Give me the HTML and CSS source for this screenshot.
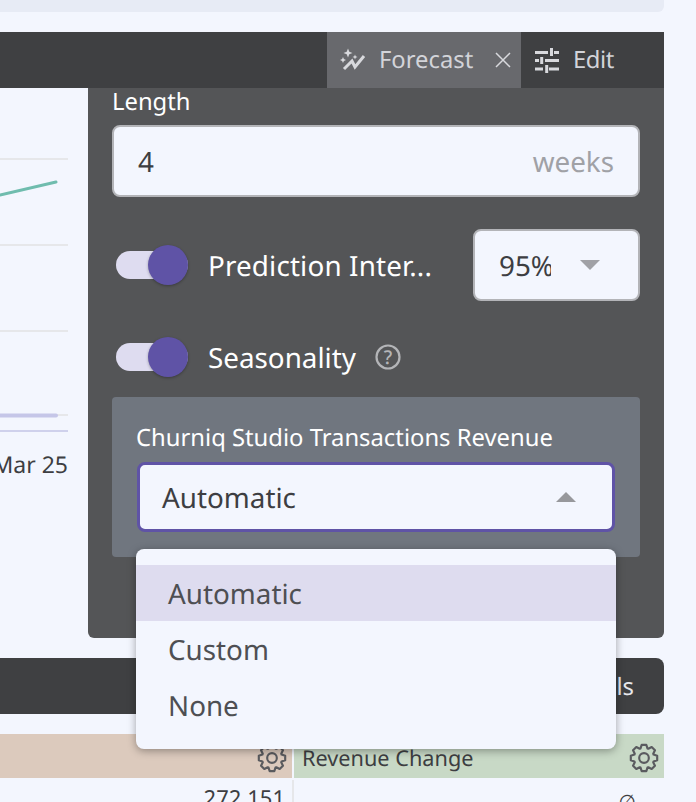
FILE: index.html
```html
<!DOCTYPE html>
<html lang="en">
<head>
<meta charset="utf-8">
<title>Forecast</title>
<link rel="stylesheet" href="styles.css">
</head>
<body>
<div class="page">
  <div class="topstrip"></div>
  <div class="tabbar">
    <div class="tab tab-active">
      <svg class="ico-forecast" viewBox="0 0 26 24" width="26" height="24"><path fill="none" stroke="#d8d9dd" stroke-width="3" d="M4 21L12 13L15 19L24 8"/><path fill="#d8d9dd" d="M8 0.500l1.300 3.200 3.200 1.300-3.200 1.300L8 9.500 6.700 6.300 3.500 5l3.200-1.300zM3 9l.9 2.100 2.100.9-2.100.9L3 15l-.9-2.100L0 12l2.100-.9zM15 6.500l.7 1.800 1.800.7-1.800.7-.7 1.800-.7-1.800-1.800-.7 1.800-.7z"/></svg>
      <span class="tab-label">Forecast</span>
      <svg class="ico-close" viewBox="0 0 16 16" width="16" height="16"><path d="M1 1L15 15M15 1L1 15" stroke="#d8d9dd" stroke-width="1.500" fill="none"/></svg>
    </div>
    <div class="tab tab-edit">
      <svg viewBox="0 0 25 27" width="25" height="27"><path fill="none" stroke="#d8d9dd" stroke-width="3" d="M0 5.500H13M19 5.500H24M16.500 1V9M0 13.500H4M10 13.500H24M6.700 10V17M0 22H8M14 22H24M11.700 18V26"/></svg>
      <span class="tab-label tab-label-edit">Edit</span>
    </div>
  </div>
  <div class="main">
    <div class="chart">
      <svg class="chart-svg" viewBox="0 0 88 330" width="88" height="330">
        <g stroke="#e6e7ea" stroke-width="2"><path d="M0 71H68M0 157H68M0 243H68M0 327H68"/></g>
        <path d="M0 107L56 94" stroke="#6fbcae" stroke-width="3" stroke-linecap="round" fill="none"/>
        <path d="M0 327.500H56" stroke="#c5c6e8" stroke-width="4" stroke-linecap="round" fill="none"/>
      </svg>
      <div class="axis-rule"></div>
      <div class="axis-label">Mar 25</div>
    </div>
    <div class="panel">
      <div class="field-label">Length</div>
      <div class="input"><span>4</span><span class="unit">weeks</span></div>
      <div class="row row-pi">
        <div class="toggle"><div class="knob"></div></div>
        <span class="row-label row-label-pi">Prediction Inter...</span>
        <div class="mini-select"><span class="mini-value">95%</span><i class="caret-down"></i></div>
      </div>
      <div class="row row-season">
        <div class="toggle"><div class="knob"></div></div>
        <span class="row-label">Seasonality</span>
        <svg class="ico-help" viewBox="0 0 26 26" width="26" height="26"><circle cx="13" cy="13" r="11.500" fill="none" stroke="#b4b5b8" stroke-width="2.200"/><text x="13" y="19.500" text-anchor="middle" class="help-q">?</text></svg>
      </div>
      <div class="section">
        <div class="section-title">Churniq Studio Transactions Revenue</div>
        <div class="select"><span class="select-value">Automatic</span><i class="caret-up"></i></div>
      </div>
    </div>
  </div>
  <div class="detailbar"><span>Details</span></div>
  <div class="table">
    <div class="head head-a"><svg class="gear" viewBox="0 0 28 28" width="30" height="30"><use href="#gear"/></svg></div>
    <div class="head head-b"><span>Revenue Change</span><svg class="gear" viewBox="0 0 28 28" width="30" height="30"><use href="#gear"/></svg></div>
    <div class="cell cell-a">272,151</div>
    <div class="cell cell-b">∅</div>
  </div>
  <div class="menu">
    <div class="opt opt-sel">Automatic</div>
    <div class="opt">Custom</div>
    <div class="opt">None</div>
  </div>
</div>
<svg width="0" height="0" class="defs"><defs><g id="gear" fill="none" stroke="#5a5b5f" stroke-width="2" stroke-linejoin="round"><path d="M10.750 5.070L11.830 1.690H16.170L17.250 5.070L18.020 5.390L21.170 3.760L24.240 6.830L22.610 9.980L22.930 10.750L26.310 11.830V16.170L22.930 17.250L22.610 18.020L24.240 21.170L21.170 24.240L18.020 22.610L17.250 22.930L16.170 26.310H11.830L10.750 22.930L9.980 22.610L6.830 24.240L3.760 21.170L5.390 18.020L5.070 17.250L1.690 16.170V11.830L5.070 10.750L5.390 9.980L3.760 6.830L6.830 3.760L9.980 5.390Z"/><circle cx="14" cy="14" r="4.500"/></g></defs></svg>
</body>
</html>
```
FILE: styles.css
```css
html, body { margin: 0; padding: 0; }
body { background: #f3f6fe; font-family: "Noto Sans", sans-serif; overflow: hidden; text-rendering: geometricPrecision; }
.page { position: relative; width: 696px; height: 802px; overflow: hidden; }
.defs { position: absolute; }
.topstrip { width: 664px; height: 12px; background: #e7ebf5; border-radius: 0 0 6px 0; margin-bottom: 20px; }
.tabbar { width: 664px; height: 56px; background: #3f4042; display: flex; justify-content: flex-end; }
.tab { display: flex; align-items: center; color: #d3d4d9; font-size: 23.8px; }
.tab-active { width: 194px; background: #68696d; padding-left: 13px; box-sizing: border-box; }
.tab-active .tab-label { margin-left: 13px; }
.ico-close { margin-left: 22px; }
.tab-edit { width: 143px; padding-left: 14px; box-sizing: border-box; }
.tab-edit .tab-label { margin-left: 13px; }
.tab-label { padding-bottom: 2px; }
.tab-label-edit { letter-spacing: -.4px; }
.main { width: 664px; height: 550px; display: flex; }
.chart { width: 88px; position: relative; flex: none; }
.chart-svg { position: absolute; left: 0; top: 0; }
.axis-rule { position: absolute; left: 0; top: 342px; width: 68px; height: 2px; background: #cfd1ec; }
.axis-label { position: absolute; right: 20px; top: 358px; font-size: 23px; line-height: 36px; color: #3d3e42; white-space: nowrap; }
.panel { flex: 1; background: #545557; border-radius: 0 0 6px 6px; padding: 0 24px; box-sizing: border-box; color: #fff; }
.field-label { font-size: 23.8px; line-height: 26px; height: 37px; color: #fff; }
.input { height: 72px; box-sizing: border-box; background: #f3f6fe; border: 2px solid #b3b4b8; border-radius: 8px; display: flex; justify-content: space-between; align-items: center; padding: 2px 24px 0; font-size: 27.8px; color: #3d3e42; }
.unit { color: #a0a1a6; }
.row { display: flex; align-items: center; height: 72px; }
.row-pi { margin-top: 32px; }
.row-season { margin-top: 20px; }
.toggle { width: 72px; height: 28px; margin-left: 4px; background: #dedcf0; border-radius: 14px; position: relative; flex: none; }
.knob { position: absolute; right: 0; top: -6px; width: 40px; height: 40px; border-radius: 50%; background: #5f53a6; box-shadow: 0 1px 3px rgba(0,0,0,.3); }
.row-label { font-size: 27.8px; margin-left: 20px; padding-top: 2px; white-space: nowrap; }
.row-label-pi { letter-spacing: .15px; }
.mini-select { margin-left: auto; width: 167px; height: 72px; box-sizing: border-box; background: #f3f6fe; border: 2px solid #b3b4b8; border-radius: 8px; display: flex; align-items: center; padding-left: 24px; font-size: 27.8px; color: #3d3e42; }
.mini-value { width: 52px; padding-top: 2px; overflow: hidden; white-space: nowrap; flex: none; }
.caret-down { width: 0; height: 0; border-left: 10px solid transparent; border-right: 10px solid transparent; border-top: 10px solid #a0a1a6; margin-left: 29px; }
.caret-up { width: 0; height: 0; border-left: 10px solid transparent; border-right: 10px solid transparent; border-bottom: 10px solid #97989c; }
.ico-help { margin-left: 19px; }
.help-q { font-size: 19px; font-weight: 500; fill: #b4b5b8; }
.section { margin-top: 4px; height: 160px; background: #70767f; border-radius: 4px; padding: 24px 25px 0 24px; box-sizing: border-box; }
.section-title { font-size: 23.8px; line-height: 32px; height: 41px; white-space: nowrap; }
.select { height: 70px; margin-left: 1px; box-sizing: border-box; background: #f3f6fe; border: 3px solid #5f53a6; border-radius: 8px; display: flex; align-items: center; justify-content: space-between; padding: 0 36px 0 22px; font-size: 27.8px; color: #3d3e42; }
.select-value { padding-top: 2px; }
.detailbar { width: 664px; height: 56px; margin-top: 20px; background: #3f4042; border-radius: 0 8px 8px 0; display: flex; align-items: center; justify-content: flex-end; padding-right: 30px; box-sizing: border-box; color: #e6e7ec; font-size: 23.8px; }
.table { width: 664px; margin-top: 20px; display: grid; grid-template-columns: 294px 370px; grid-template-rows: 44px 24px; }
.head { display: flex; align-items: center; justify-content: space-between; box-sizing: border-box; padding-top: 4px; }
.head-a { background: #dccabd; justify-content: flex-end; padding-right: 5px; margin-right: 2px; }
.head-b { background: #c8d9c6; padding-right: 5px; padding-left: 8px; font-size: 21.7px; color: #3d3e42; }
.gear { display: block; }
.cell { font-size: 22px; line-height: 36px; color: #3d3e42; text-align: right; margin-top: 2px; }
.cell-a { padding-right: 7px; border-right: 2px solid #e6e7ea; }
.cell-b { padding-right: 28px; font-size: 20px; padding-top: 4px; }
.menu { position: absolute; left: 136px; top: 549px; width: 480px; height: 200px; box-sizing: border-box; padding: 16px 0; background: #f3f6fe; border-radius: 8px; box-shadow: 0 2px 8px rgba(0,0,0,.35); }
.opt { height: 56px; line-height: 58px; padding-left: 32px; font-size: 27.8px; color: #4e4f53; }
.opt-sel { background: #dedcef; }
```
